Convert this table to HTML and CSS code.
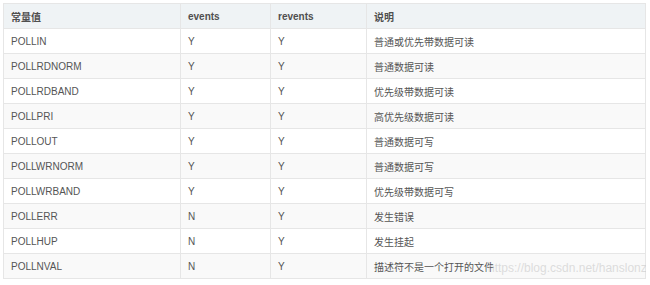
FILE: index.html
```html
<!DOCTYPE html>
<html>
<head>
<meta charset="utf-8">
<link rel="stylesheet" href="styles.css">
</head>
<body>
<div class="wrap">
<table class="tbl">
<colgroup><col class="c1"><col class="c2"><col class="c3"><col class="c4"></colgroup>
<thead>
<tr><th>常量值</th><th>events</th><th>revents</th><th>说明</th></tr>
</thead>
<tbody>
<tr><td>POLLIN</td><td>Y</td><td>Y</td><td>普通或优先带数据可读</td></tr>
<tr><td>POLLRDNORM</td><td>Y</td><td>Y</td><td>普通数据可读</td></tr>
<tr><td>POLLRDBAND</td><td>Y</td><td>Y</td><td>优先级带数据可读</td></tr>
<tr><td>POLLPRI</td><td>Y</td><td>Y</td><td>高优先级数据可读</td></tr>
<tr><td>POLLOUT</td><td>Y</td><td>Y</td><td>普通数据可写</td></tr>
<tr><td>POLLWRNORM</td><td>Y</td><td>Y</td><td>普通数据可写</td></tr>
<tr><td>POLLWRBAND</td><td>Y</td><td>Y</td><td>优先级带数据可写</td></tr>
<tr><td>POLLERR</td><td>N</td><td>Y</td><td>发生错误</td></tr>
<tr><td>POLLHUP</td><td>N</td><td>Y</td><td>发生挂起</td></tr>
<tr><td>POLLNVAL</td><td>N</td><td>Y</td><td>描述符不是一个打开的文件</td></tr>
</tbody>
</table>
<span class="wm">https://blog.csdn.net/hanslonz</span>
</div>
</body>
</html>
```
FILE: styles.css
```css
html, body { margin: 0; padding: 0; background: #fff; }
body { padding: 3px; }
.wrap { position: relative; width: 643px; overflow: hidden; }
.tbl {
  border-collapse: collapse;
  table-layout: fixed;
  width: 642px;
  font-family: "Liberation Sans", Arial, "Noto Sans CJK SC", sans-serif;
  font-size: 10px;
  color: #555;
}
.c1 { width: 177px; }
.c2 { width: 90px; }
.c3 { width: 96px; }
.c4 { width: 279px; }
.tbl th, .tbl td {
  border: 1px solid #e6e6e6;
  height: 24px;
  padding: 0 7px;
  text-align: left;
  vertical-align: middle;
  white-space: nowrap;
}
.tbl th { background: #eff3f5; font-weight: bold; color: #4f4f4f; }
.tbl tbody tr:nth-child(even) td { background: #f9f9f9; }
.wm {
  position: absolute;
  left: 485px;
  top: 258px;
  font-family: "Liberation Sans", Arial, sans-serif;
  font-size: 12px;
  color: rgba(200, 200, 200, 0.6);
  white-space: nowrap;
}
```
